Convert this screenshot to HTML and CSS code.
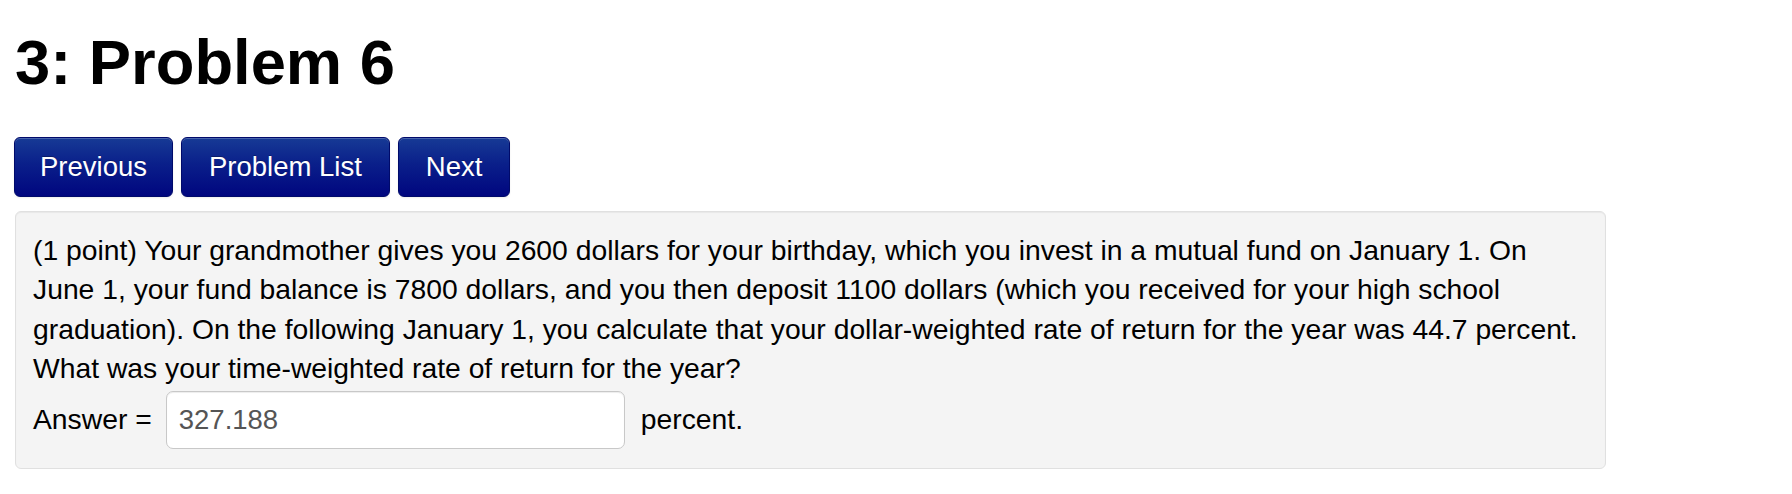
FILE: index.html
```html
<!DOCTYPE html>
<html lang="en">
<head>
<meta charset="utf-8">
<title>3: Problem 6</title>
<link rel="stylesheet" href="styles.css">
</head>
<body>
<main class="page">
  <h1 class="title">3: Problem 6</h1>
  <nav class="nav">
    <a class="btn" href="#">Previous</a>
    <a class="btn btn-wide" href="#">Problem List</a>
    <a class="btn btn-wide" href="#">Next</a>
  </nav>
  <section class="well">
    <p class="problem">(1 point) Your grandmother gives you 2600 dollars for your birthday, which you invest in a mutual fund on January 1. On June 1, your fund balance is 7800 dollars, and you then deposit 1100 dollars (which you received for your high school graduation). On the following January 1, you calculate that your dollar-weighted rate of return for the year was 44.7 percent. What was your time-weighted rate of return for the year?</p>
    <div class="answer">
      <span class="label">Answer =</span>
      <input class="field" type="text" value="327.188">
      <span class="unit">percent.</span>
    </div>
  </section>
</main>
</body>
</html>
```
FILE: styles.css
```css
* { box-sizing: border-box; }
html, body { margin: 0; padding: 0; background: #fff; }
body {
  font-family: "Liberation Sans", Arial, Helvetica, sans-serif;
  color: #000;
}
.page {
  padding: 27px 0 0 14px;
}
.title {
  margin: 0;
  font-size: 63.3px;
  line-height: 70px;
  font-weight: 700;
  color: #000;
  padding-left: 1px;
}
.nav {
  display: flex;
  gap: 8px;
  margin-top: 40px;
}
.btn {
  display: inline-block;
  height: 60px;
  padding: 9px 25px;
  font-size: 27.5px;
  line-height: 40px;
  color: #fff;
  text-decoration: none;
  border: 1px solid #000a6a;
  border-radius: 6px;
  background: linear-gradient(to bottom, #173a95 0%, #0a1f8a 45%, #00067f 100%);
  box-shadow: inset 0 1px 0 rgba(255,255,255,0.22), 0 1px 2px rgba(0,0,0,0.08);
  text-shadow: 0 -1px 0 rgba(0,0,0,0.25);
}
.btn-wide {
  padding-left: 27px;
  padding-right: 27px;
}
.well {
  width: 1591px;
  margin-top: 14px;
  margin-left: 1px;
  padding: 19px 22px 19px 17px;
  background: #f4f4f4;
  border: 1px solid #e0e0e0;
  border-radius: 6px;
  box-shadow: inset 0 1px 1px rgba(0,0,0,0.05);
  font-size: 28.3px;
  line-height: 39.4px;
}
.problem {
  margin: 0;
}
.answer {
  display: flex;
  align-items: center;
  margin-top: 2px;
  height: 58px;
}
.label {
  margin-right: 14px;
}
.field {
  width: 459px;
  height: 58px;
  padding: 0 12px;
  font-family: inherit;
  font-size: 27.5px;
  color: #555;
  background: #fff;
  border: 1px solid #c8c8c8;
  border-radius: 7px;
  box-shadow: inset 0 1px 1px rgba(0,0,0,0.075);
  outline: none;
}
.unit {
  margin-left: 16px;
}
```
